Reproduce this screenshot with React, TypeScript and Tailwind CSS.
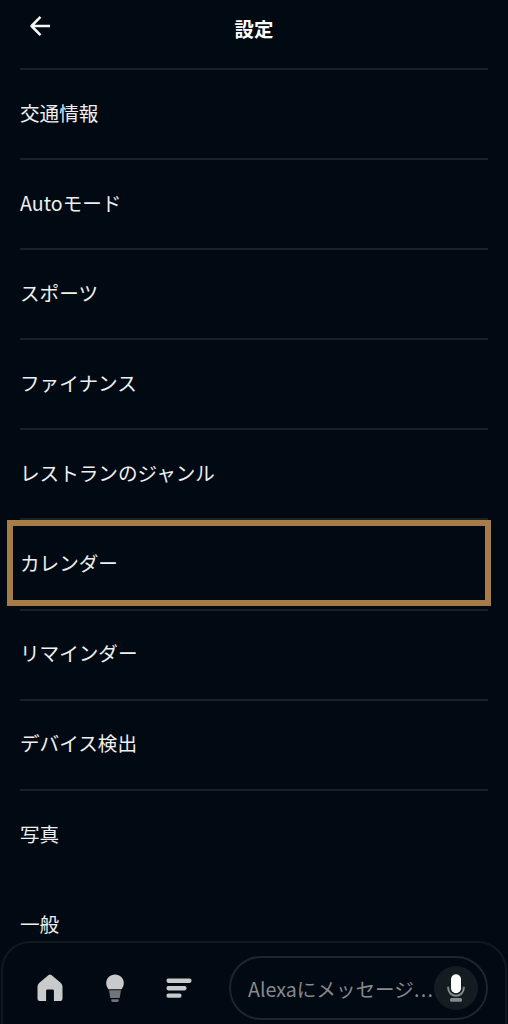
const rows = [
  "交通情報",
  "Autoモード",
  "スポーツ",
  "ファイナンス",
  "レストランのジャンル",
  "カレンダー",
  "リマインダー",
  "デバイス検出",
  "写真",
  "一般",
];

const unlined = new Set(["写真", "一般"]);

function SettingsRow({ label }: { label: string }) {
  const selected = label === "カレンダー";
  const line = unlined.has(label) ? "border-transparent" : "border-[#1a2026]";
  return (
    <li className={`relative flex h-[90.1px] shrink-0 items-center border-b-2 pb-[2.6px] ${line}`}>
      <span className="leading-7">{label}</span>
      {selected && (
        <span className="absolute -top-[0.5px] -left-[13px] h-[86px] w-[484px] border-6 border-[#a67c48]" />
      )}
    </li>
  );
}

function BackIcon() {
  return (
    <svg width="22" height="20" viewBox="0 0 22 20" fill="none" stroke="#f7f8f8" strokeWidth="2.5" strokeLinejoin="round">
      <path d="M11.5 0.9 2.5 10l9 9.1M2.5 10H21" />
    </svg>
  );
}

function HomeIcon() {
  return (
    <svg width="26" height="28" viewBox="0 0 26 28" fill="#c8cacc">
      <path d="M11.6 1.1Q13 0 14.4 1.1L23.9 8.9Q25.5 10.4 25.5 12.4V24.8Q25.5 27 23.3 27H16.9V16.7Q16.9 15.5 15.7 15.5H10.3Q9.1 15.5 9.1 16.7V27H2.7Q.5 27 .5 24.8V12.4Q.5 10.4 2.1 8.9Z" />
    </svg>
  );
}

function BulbIcon() {
  return (
    <svg width="20" height="29" viewBox="0 0 20 29">
      <path fill="#c8cacc" d="M10 .5C15 .5 18.8 4.2 18.8 9c0 2.4-.8 4.500-2.200 6.200H3.400C2 13.500 1.200 11.400 1.200 9 1.200 4.200 5 .5 10 .5Z" />
      <path fill="#707579" d="M4 16.200h12l-1.300 7.800H5.300ZM6.300 25.200h7.400v1.500q0 1.200-1.300 1.200H7.600q-1.300 0-1.300-1.200Z" />
    </svg>
  );
}

function MenuIcon() {
  return (
    <svg width="26" height="20" viewBox="0 0 26 20" fill="#c8cacc">
      <rect x=".5" y=".5" width="25" height="4.400" rx="1.800" />
      <rect x=".5" y="8" width="20" height="4.400" rx="1.800" />
      <rect x=".5" y="15.400" width="15" height="4.400" rx="1.800" />
    </svg>
  );
}

function MicIcon() {
  return (
    <svg width="18" height="28" viewBox="0 0 18 28">
      <path d="M1.200 12.800v1.200a7.800 7.800 0 0 0 15.600 0v-1.200" fill="none" stroke="#858a8d" strokeWidth="2" />
      <rect x="3" y="24" width="12" height="3.800" rx="1.500" fill="#858a8d" />
      <rect x="4" y=".3" width="10" height="19" rx="5" fill="#fff" />
    </svg>
  );
}

export default function App() {
  return (
    <div className="flex h-[1024px] w-[508px] flex-col overflow-hidden bg-[#010912] font-['Noto_Sans_CJK_JP',sans-serif] text-[19.6px] text-[#eeefef]">
      <header className="mx-5 grid h-[70px] shrink-0 grid-cols-[1fr_auto_1fr] border-b-2 border-[#1a2026]">
        <button className="mt-4 ml-[9px] h-5 w-[22px]" aria-label="戻る">
          <BackIcon />
        </button>
        <h1 className="mt-[15px] text-[19.4px] leading-7 font-bold text-white">設定</h1>
      </header>
      <ul className="mx-5 flex h-[871px] shrink-0 flex-col">
        {rows.map((label) => (
          <SettingsRow key={label} label={label} />
        ))}
      </ul>
      <nav className="relative mx-px flex h-[100px] shrink-0 items-start rounded-t-[29px] border-2 border-b-0 border-[#11191f] bg-[#010912] pt-[13px]">
        <div className="flex h-16 items-center pl-[33.5px]">
          <HomeIcon />
          <div className="ml-[42px]">
            <BulbIcon />
          </div>
          <div className="ml-[41.5px]">
            <MenuIcon />
          </div>
        </div>
        <div className="ml-[37px] flex h-16 w-[259px] items-center rounded-full border-2 border-[#1f252a] pl-[17px]">
          <span className="w-[188px] shrink-0 pt-[2px] whitespace-nowrap text-[#868a8d]">
            Alexaにメッセージ<span className="tracking-[1.4px]">...</span>
          </span>
          <button className="-ml-[2px] flex size-11 shrink-0 items-center justify-center rounded-full bg-[#121c21]" aria-label="音声入力">
            <MicIcon />
          </button>
        </div>
      </nav>
    </div>
  );
}
